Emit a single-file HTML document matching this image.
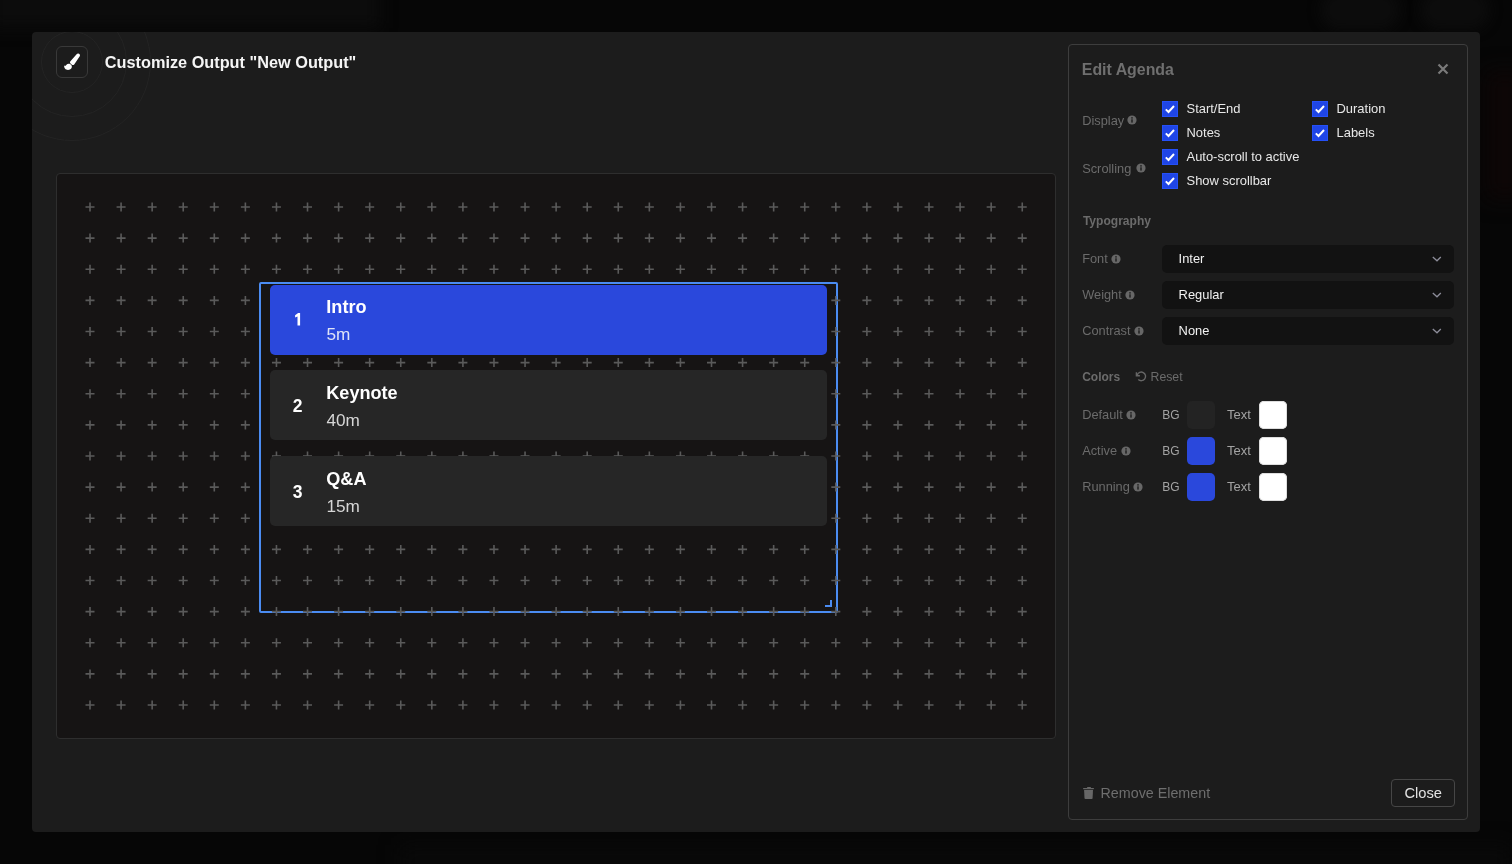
<!DOCTYPE html>
<html><head><meta charset="utf-8"><style>
*{box-sizing:border-box;margin:0;padding:0}
html,body{width:1512px;height:864px;overflow:hidden;background:#060606;font-family:"Liberation Sans", sans-serif}
#root{position:absolute;left:0;top:0;width:1512px;height:864px;overflow:hidden;will-change:transform}
.r{position:absolute}
.t{position:absolute;line-height:1;white-space:nowrap}
</style></head><body><div id="root">
<div class="r" style="left:0px;top:0px;width:1512px;height:864px;background:#060606"></div>
<div class="r" style="left:-10px;top:-20px;width:390px;height:48px;background:#0c0c0c;filter:blur(8px)"></div>
<div class="r" style="left:1320px;top:-10px;width:80px;height:40px;background:#0c0c0c;border-radius:20px;filter:blur(6px)"></div>
<div class="r" style="left:1420px;top:-10px;width:70px;height:40px;background:#0c0c0c;border-radius:20px;filter:blur(6px)"></div>
<div class="r" style="left:400px;top:845px;width:1112px;height:40px;background:#090909;filter:blur(10px)"></div>
<div class="r" style="left:1485px;top:70px;width:40px;height:130px;background:#0d0606;filter:blur(10px)"></div>
<div class="r" style="left:32px;top:32px;width:1448px;height:800px;background:#1c1c1c;border-radius:4px"></div>
<div class="r" style="left:32px;top:32px;width:1448px;height:800px;overflow:hidden;border-radius:4px">
<div class="r" style="left:9px;top:-1px;width:62px;height:62px;border:1px solid #242424;border-radius:50%"></div>
<div class="r" style="left:-15px;top:-25px;width:110px;height:110px;border:1px solid #242424;border-radius:50%"></div>
<div class="r" style="left:-39px;top:-49px;width:158px;height:158px;border:1px solid #242424;border-radius:50%"></div>
</div>
<div class="r" style="left:56px;top:46px;width:32px;height:32px;border:1px solid #393939;border-radius:6px;background:#1c1c1c"></div>
<svg class="r" style="left:60px;top:50px;" width="24" height="24" viewBox="0 0 24 24"><path d="M10.2 11.6L16.6 4.3A1.9 1.9 0 0 1 19.9 6.1L14.2 14.6Q13 15.6 11.6 14.6L10.5 13.6Q9.6 12.6 10.2 11.6Z" fill="#fff"/><path d="M4.2 15.2C4.6 16.4 5.8 16.1 6.5 14.8C7.5 13.3 10.5 13.3 11.6 15.6C12.5 17.6 11 19.9 8 19.9C5.5 19.9 3.8 17.8 4.2 15.2Z" fill="#fff"/></svg>
<div class="t" style="left:104.8px;top:54.20px;font-size:16.3px;color:#f5f5f5;font-weight:bold;">Customize Output "New Output"</div>
<div class="r" style="left:56px;top:173px;width:1000px;height:566px;background:#161414;border:1px solid #2e2e2e;border-radius:4px"></div>
<div class="r" style="left:259px;top:282px;width:579px;height:331px;border:2px solid #4b8cf2;border-radius:2px"></div>
<svg class="r" style="left:57px;top:174px;" width="998" height="564" viewBox="0 0 998 564"><g transform="translate(-57 -174)"><path d="M85.50 207.00h9M90.00 202.50v9M116.58 207.00h9M121.08 202.50v9M147.65 207.00h9M152.15 202.50v9M178.72 207.00h9M183.22 202.50v9M209.80 207.00h9M214.30 202.50v9M240.88 207.00h9M245.38 202.50v9M271.95 207.00h9M276.45 202.50v9M303.02 207.00h9M307.52 202.50v9M334.10 207.00h9M338.60 202.50v9M365.18 207.00h9M369.68 202.50v9M396.25 207.00h9M400.75 202.50v9M427.32 207.00h9M431.82 202.50v9M458.40 207.00h9M462.90 202.50v9M489.47 207.00h9M493.97 202.50v9M520.55 207.00h9M525.05 202.50v9M551.62 207.00h9M556.12 202.50v9M582.70 207.00h9M587.20 202.50v9M613.77 207.00h9M618.27 202.50v9M644.85 207.00h9M649.35 202.50v9M675.92 207.00h9M680.42 202.50v9M707.00 207.00h9M711.50 202.50v9M738.07 207.00h9M742.57 202.50v9M769.15 207.00h9M773.65 202.50v9M800.23 207.00h9M804.73 202.50v9M831.30 207.00h9M835.80 202.50v9M862.38 207.00h9M866.88 202.50v9M893.45 207.00h9M897.95 202.50v9M924.52 207.00h9M929.02 202.50v9M955.60 207.00h9M960.10 202.50v9M986.67 207.00h9M991.17 202.50v9M1017.75 207.00h9M1022.25 202.50v9M85.50 238.12h9M90.00 233.62v9M116.58 238.12h9M121.08 233.62v9M147.65 238.12h9M152.15 233.62v9M178.72 238.12h9M183.22 233.62v9M209.80 238.12h9M214.30 233.62v9M240.88 238.12h9M245.38 233.62v9M271.95 238.12h9M276.45 233.62v9M303.02 238.12h9M307.52 233.62v9M334.10 238.12h9M338.60 233.62v9M365.18 238.12h9M369.68 233.62v9M396.25 238.12h9M400.75 233.62v9M427.32 238.12h9M431.82 233.62v9M458.40 238.12h9M462.90 233.62v9M489.47 238.12h9M493.97 233.62v9M520.55 238.12h9M525.05 233.62v9M551.62 238.12h9M556.12 233.62v9M582.70 238.12h9M587.20 233.62v9M613.77 238.12h9M618.27 233.62v9M644.85 238.12h9M649.35 233.62v9M675.92 238.12h9M680.42 233.62v9M707.00 238.12h9M711.50 233.62v9M738.07 238.12h9M742.57 233.62v9M769.15 238.12h9M773.65 233.62v9M800.23 238.12h9M804.73 233.62v9M831.30 238.12h9M835.80 233.62v9M862.38 238.12h9M866.88 233.62v9M893.45 238.12h9M897.95 233.62v9M924.52 238.12h9M929.02 233.62v9M955.60 238.12h9M960.10 233.62v9M986.67 238.12h9M991.17 233.62v9M1017.75 238.12h9M1022.25 233.62v9M85.50 269.25h9M90.00 264.75v9M116.58 269.25h9M121.08 264.75v9M147.65 269.25h9M152.15 264.75v9M178.72 269.25h9M183.22 264.75v9M209.80 269.25h9M214.30 264.75v9M240.88 269.25h9M245.38 264.75v9M271.95 269.25h9M276.45 264.75v9M303.02 269.25h9M307.52 264.75v9M334.10 269.25h9M338.60 264.75v9M365.18 269.25h9M369.68 264.75v9M396.25 269.25h9M400.75 264.75v9M427.32 269.25h9M431.82 264.75v9M458.40 269.25h9M462.90 264.75v9M489.47 269.25h9M493.97 264.75v9M520.55 269.25h9M525.05 264.75v9M551.62 269.25h9M556.12 264.75v9M582.70 269.25h9M587.20 264.75v9M613.77 269.25h9M618.27 264.75v9M644.85 269.25h9M649.35 264.75v9M675.92 269.25h9M680.42 264.75v9M707.00 269.25h9M711.50 264.75v9M738.07 269.25h9M742.57 264.75v9M769.15 269.25h9M773.65 264.75v9M800.23 269.25h9M804.73 264.75v9M831.30 269.25h9M835.80 264.75v9M862.38 269.25h9M866.88 264.75v9M893.45 269.25h9M897.95 264.75v9M924.52 269.25h9M929.02 264.75v9M955.60 269.25h9M960.10 264.75v9M986.67 269.25h9M991.17 264.75v9M1017.75 269.25h9M1022.25 264.75v9M85.50 300.38h9M90.00 295.88v9M116.58 300.38h9M121.08 295.88v9M147.65 300.38h9M152.15 295.88v9M178.72 300.38h9M183.22 295.88v9M209.80 300.38h9M214.30 295.88v9M240.88 300.38h9M245.38 295.88v9M271.95 300.38h9M276.45 295.88v9M303.02 300.38h9M307.52 295.88v9M334.10 300.38h9M338.60 295.88v9M365.18 300.38h9M369.68 295.88v9M396.25 300.38h9M400.75 295.88v9M427.32 300.38h9M431.82 295.88v9M458.40 300.38h9M462.90 295.88v9M489.47 300.38h9M493.97 295.88v9M520.55 300.38h9M525.05 295.88v9M551.62 300.38h9M556.12 295.88v9M582.70 300.38h9M587.20 295.88v9M613.77 300.38h9M618.27 295.88v9M644.85 300.38h9M649.35 295.88v9M675.92 300.38h9M680.42 295.88v9M707.00 300.38h9M711.50 295.88v9M738.07 300.38h9M742.57 295.88v9M769.15 300.38h9M773.65 295.88v9M800.23 300.38h9M804.73 295.88v9M831.30 300.38h9M835.80 295.88v9M862.38 300.38h9M866.88 295.88v9M893.45 300.38h9M897.95 295.88v9M924.52 300.38h9M929.02 295.88v9M955.60 300.38h9M960.10 295.88v9M986.67 300.38h9M991.17 295.88v9M1017.75 300.38h9M1022.25 295.88v9M85.50 331.50h9M90.00 327.00v9M116.58 331.50h9M121.08 327.00v9M147.65 331.50h9M152.15 327.00v9M178.72 331.50h9M183.22 327.00v9M209.80 331.50h9M214.30 327.00v9M240.88 331.50h9M245.38 327.00v9M271.95 331.50h9M276.45 327.00v9M303.02 331.50h9M307.52 327.00v9M334.10 331.50h9M338.60 327.00v9M365.18 331.50h9M369.68 327.00v9M396.25 331.50h9M400.75 327.00v9M427.32 331.50h9M431.82 327.00v9M458.40 331.50h9M462.90 327.00v9M489.47 331.50h9M493.97 327.00v9M520.55 331.50h9M525.05 327.00v9M551.62 331.50h9M556.12 327.00v9M582.70 331.50h9M587.20 327.00v9M613.77 331.50h9M618.27 327.00v9M644.85 331.50h9M649.35 327.00v9M675.92 331.50h9M680.42 327.00v9M707.00 331.50h9M711.50 327.00v9M738.07 331.50h9M742.57 327.00v9M769.15 331.50h9M773.65 327.00v9M800.23 331.50h9M804.73 327.00v9M831.30 331.50h9M835.80 327.00v9M862.38 331.50h9M866.88 327.00v9M893.45 331.50h9M897.95 327.00v9M924.52 331.50h9M929.02 327.00v9M955.60 331.50h9M960.10 327.00v9M986.67 331.50h9M991.17 327.00v9M1017.75 331.50h9M1022.25 327.00v9M85.50 362.62h9M90.00 358.12v9M116.58 362.62h9M121.08 358.12v9M147.65 362.62h9M152.15 358.12v9M178.72 362.62h9M183.22 358.12v9M209.80 362.62h9M214.30 358.12v9M240.88 362.62h9M245.38 358.12v9M271.95 362.62h9M276.45 358.12v9M303.02 362.62h9M307.52 358.12v9M334.10 362.62h9M338.60 358.12v9M365.18 362.62h9M369.68 358.12v9M396.25 362.62h9M400.75 358.12v9M427.32 362.62h9M431.82 358.12v9M458.40 362.62h9M462.90 358.12v9M489.47 362.62h9M493.97 358.12v9M520.55 362.62h9M525.05 358.12v9M551.62 362.62h9M556.12 358.12v9M582.70 362.62h9M587.20 358.12v9M613.77 362.62h9M618.27 358.12v9M644.85 362.62h9M649.35 358.12v9M675.92 362.62h9M680.42 358.12v9M707.00 362.62h9M711.50 358.12v9M738.07 362.62h9M742.57 358.12v9M769.15 362.62h9M773.65 358.12v9M800.23 362.62h9M804.73 358.12v9M831.30 362.62h9M835.80 358.12v9M862.38 362.62h9M866.88 358.12v9M893.45 362.62h9M897.95 358.12v9M924.52 362.62h9M929.02 358.12v9M955.60 362.62h9M960.10 358.12v9M986.67 362.62h9M991.17 358.12v9M1017.75 362.62h9M1022.25 358.12v9M85.50 393.75h9M90.00 389.25v9M116.58 393.75h9M121.08 389.25v9M147.65 393.75h9M152.15 389.25v9M178.72 393.75h9M183.22 389.25v9M209.80 393.75h9M214.30 389.25v9M240.88 393.75h9M245.38 389.25v9M271.95 393.75h9M276.45 389.25v9M303.02 393.75h9M307.52 389.25v9M334.10 393.75h9M338.60 389.25v9M365.18 393.75h9M369.68 389.25v9M396.25 393.75h9M400.75 389.25v9M427.32 393.75h9M431.82 389.25v9M458.40 393.75h9M462.90 389.25v9M489.47 393.75h9M493.97 389.25v9M520.55 393.75h9M525.05 389.25v9M551.62 393.75h9M556.12 389.25v9M582.70 393.75h9M587.20 389.25v9M613.77 393.75h9M618.27 389.25v9M644.85 393.75h9M649.35 389.25v9M675.92 393.75h9M680.42 389.25v9M707.00 393.75h9M711.50 389.25v9M738.07 393.75h9M742.57 389.25v9M769.15 393.75h9M773.65 389.25v9M800.23 393.75h9M804.73 389.25v9M831.30 393.75h9M835.80 389.25v9M862.38 393.75h9M866.88 389.25v9M893.45 393.75h9M897.95 389.25v9M924.52 393.75h9M929.02 389.25v9M955.60 393.75h9M960.10 389.25v9M986.67 393.75h9M991.17 389.25v9M1017.75 393.75h9M1022.25 389.25v9M85.50 424.88h9M90.00 420.38v9M116.58 424.88h9M121.08 420.38v9M147.65 424.88h9M152.15 420.38v9M178.72 424.88h9M183.22 420.38v9M209.80 424.88h9M214.30 420.38v9M240.88 424.88h9M245.38 420.38v9M271.95 424.88h9M276.45 420.38v9M303.02 424.88h9M307.52 420.38v9M334.10 424.88h9M338.60 420.38v9M365.18 424.88h9M369.68 420.38v9M396.25 424.88h9M400.75 420.38v9M427.32 424.88h9M431.82 420.38v9M458.40 424.88h9M462.90 420.38v9M489.47 424.88h9M493.97 420.38v9M520.55 424.88h9M525.05 420.38v9M551.62 424.88h9M556.12 420.38v9M582.70 424.88h9M587.20 420.38v9M613.77 424.88h9M618.27 420.38v9M644.85 424.88h9M649.35 420.38v9M675.92 424.88h9M680.42 420.38v9M707.00 424.88h9M711.50 420.38v9M738.07 424.88h9M742.57 420.38v9M769.15 424.88h9M773.65 420.38v9M800.23 424.88h9M804.73 420.38v9M831.30 424.88h9M835.80 420.38v9M862.38 424.88h9M866.88 420.38v9M893.45 424.88h9M897.95 420.38v9M924.52 424.88h9M929.02 420.38v9M955.60 424.88h9M960.10 420.38v9M986.67 424.88h9M991.17 420.38v9M1017.75 424.88h9M1022.25 420.38v9M85.50 456.00h9M90.00 451.50v9M116.58 456.00h9M121.08 451.50v9M147.65 456.00h9M152.15 451.50v9M178.72 456.00h9M183.22 451.50v9M209.80 456.00h9M214.30 451.50v9M240.88 456.00h9M245.38 451.50v9M271.95 456.00h9M276.45 451.50v9M303.02 456.00h9M307.52 451.50v9M334.10 456.00h9M338.60 451.50v9M365.18 456.00h9M369.68 451.50v9M396.25 456.00h9M400.75 451.50v9M427.32 456.00h9M431.82 451.50v9M458.40 456.00h9M462.90 451.50v9M489.47 456.00h9M493.97 451.50v9M520.55 456.00h9M525.05 451.50v9M551.62 456.00h9M556.12 451.50v9M582.70 456.00h9M587.20 451.50v9M613.77 456.00h9M618.27 451.50v9M644.85 456.00h9M649.35 451.50v9M675.92 456.00h9M680.42 451.50v9M707.00 456.00h9M711.50 451.50v9M738.07 456.00h9M742.57 451.50v9M769.15 456.00h9M773.65 451.50v9M800.23 456.00h9M804.73 451.50v9M831.30 456.00h9M835.80 451.50v9M862.38 456.00h9M866.88 451.50v9M893.45 456.00h9M897.95 451.50v9M924.52 456.00h9M929.02 451.50v9M955.60 456.00h9M960.10 451.50v9M986.67 456.00h9M991.17 451.50v9M1017.75 456.00h9M1022.25 451.50v9M85.50 487.12h9M90.00 482.62v9M116.58 487.12h9M121.08 482.62v9M147.65 487.12h9M152.15 482.62v9M178.72 487.12h9M183.22 482.62v9M209.80 487.12h9M214.30 482.62v9M240.88 487.12h9M245.38 482.62v9M271.95 487.12h9M276.45 482.62v9M303.02 487.12h9M307.52 482.62v9M334.10 487.12h9M338.60 482.62v9M365.18 487.12h9M369.68 482.62v9M396.25 487.12h9M400.75 482.62v9M427.32 487.12h9M431.82 482.62v9M458.40 487.12h9M462.90 482.62v9M489.47 487.12h9M493.97 482.62v9M520.55 487.12h9M525.05 482.62v9M551.62 487.12h9M556.12 482.62v9M582.70 487.12h9M587.20 482.62v9M613.77 487.12h9M618.27 482.62v9M644.85 487.12h9M649.35 482.62v9M675.92 487.12h9M680.42 482.62v9M707.00 487.12h9M711.50 482.62v9M738.07 487.12h9M742.57 482.62v9M769.15 487.12h9M773.65 482.62v9M800.23 487.12h9M804.73 482.62v9M831.30 487.12h9M835.80 482.62v9M862.38 487.12h9M866.88 482.62v9M893.45 487.12h9M897.95 482.62v9M924.52 487.12h9M929.02 482.62v9M955.60 487.12h9M960.10 482.62v9M986.67 487.12h9M991.17 482.62v9M1017.75 487.12h9M1022.25 482.62v9M85.50 518.25h9M90.00 513.75v9M116.58 518.25h9M121.08 513.75v9M147.65 518.25h9M152.15 513.75v9M178.72 518.25h9M183.22 513.75v9M209.80 518.25h9M214.30 513.75v9M240.88 518.25h9M245.38 513.75v9M271.95 518.25h9M276.45 513.75v9M303.02 518.25h9M307.52 513.75v9M334.10 518.25h9M338.60 513.75v9M365.18 518.25h9M369.68 513.75v9M396.25 518.25h9M400.75 513.75v9M427.32 518.25h9M431.82 513.75v9M458.40 518.25h9M462.90 513.75v9M489.47 518.25h9M493.97 513.75v9M520.55 518.25h9M525.05 513.75v9M551.62 518.25h9M556.12 513.75v9M582.70 518.25h9M587.20 513.75v9M613.77 518.25h9M618.27 513.75v9M644.85 518.25h9M649.35 513.75v9M675.92 518.25h9M680.42 513.75v9M707.00 518.25h9M711.50 513.75v9M738.07 518.25h9M742.57 513.75v9M769.15 518.25h9M773.65 513.75v9M800.23 518.25h9M804.73 513.75v9M831.30 518.25h9M835.80 513.75v9M862.38 518.25h9M866.88 513.75v9M893.45 518.25h9M897.95 513.75v9M924.52 518.25h9M929.02 513.75v9M955.60 518.25h9M960.10 513.75v9M986.67 518.25h9M991.17 513.75v9M1017.75 518.25h9M1022.25 513.75v9M85.50 549.38h9M90.00 544.88v9M116.58 549.38h9M121.08 544.88v9M147.65 549.38h9M152.15 544.88v9M178.72 549.38h9M183.22 544.88v9M209.80 549.38h9M214.30 544.88v9M240.88 549.38h9M245.38 544.88v9M271.95 549.38h9M276.45 544.88v9M303.02 549.38h9M307.52 544.88v9M334.10 549.38h9M338.60 544.88v9M365.18 549.38h9M369.68 544.88v9M396.25 549.38h9M400.75 544.88v9M427.32 549.38h9M431.82 544.88v9M458.40 549.38h9M462.90 544.88v9M489.47 549.38h9M493.97 544.88v9M520.55 549.38h9M525.05 544.88v9M551.62 549.38h9M556.12 544.88v9M582.70 549.38h9M587.20 544.88v9M613.77 549.38h9M618.27 544.88v9M644.85 549.38h9M649.35 544.88v9M675.92 549.38h9M680.42 544.88v9M707.00 549.38h9M711.50 544.88v9M738.07 549.38h9M742.57 544.88v9M769.15 549.38h9M773.65 544.88v9M800.23 549.38h9M804.73 544.88v9M831.30 549.38h9M835.80 544.88v9M862.38 549.38h9M866.88 544.88v9M893.45 549.38h9M897.95 544.88v9M924.52 549.38h9M929.02 544.88v9M955.60 549.38h9M960.10 544.88v9M986.67 549.38h9M991.17 544.88v9M1017.75 549.38h9M1022.25 544.88v9M85.50 580.50h9M90.00 576.00v9M116.58 580.50h9M121.08 576.00v9M147.65 580.50h9M152.15 576.00v9M178.72 580.50h9M183.22 576.00v9M209.80 580.50h9M214.30 576.00v9M240.88 580.50h9M245.38 576.00v9M271.95 580.50h9M276.45 576.00v9M303.02 580.50h9M307.52 576.00v9M334.10 580.50h9M338.60 576.00v9M365.18 580.50h9M369.68 576.00v9M396.25 580.50h9M400.75 576.00v9M427.32 580.50h9M431.82 576.00v9M458.40 580.50h9M462.90 576.00v9M489.47 580.50h9M493.97 576.00v9M520.55 580.50h9M525.05 576.00v9M551.62 580.50h9M556.12 576.00v9M582.70 580.50h9M587.20 576.00v9M613.77 580.50h9M618.27 576.00v9M644.85 580.50h9M649.35 576.00v9M675.92 580.50h9M680.42 576.00v9M707.00 580.50h9M711.50 576.00v9M738.07 580.50h9M742.57 576.00v9M769.15 580.50h9M773.65 576.00v9M800.23 580.50h9M804.73 576.00v9M831.30 580.50h9M835.80 576.00v9M862.38 580.50h9M866.88 576.00v9M893.45 580.50h9M897.95 576.00v9M924.52 580.50h9M929.02 576.00v9M955.60 580.50h9M960.10 576.00v9M986.67 580.50h9M991.17 576.00v9M1017.75 580.50h9M1022.25 576.00v9M85.50 611.62h9M90.00 607.12v9M116.58 611.62h9M121.08 607.12v9M147.65 611.62h9M152.15 607.12v9M178.72 611.62h9M183.22 607.12v9M209.80 611.62h9M214.30 607.12v9M240.88 611.62h9M245.38 607.12v9M271.95 611.62h9M276.45 607.12v9M303.02 611.62h9M307.52 607.12v9M334.10 611.62h9M338.60 607.12v9M365.18 611.62h9M369.68 607.12v9M396.25 611.62h9M400.75 607.12v9M427.32 611.62h9M431.82 607.12v9M458.40 611.62h9M462.90 607.12v9M489.47 611.62h9M493.97 607.12v9M520.55 611.62h9M525.05 607.12v9M551.62 611.62h9M556.12 607.12v9M582.70 611.62h9M587.20 607.12v9M613.77 611.62h9M618.27 607.12v9M644.85 611.62h9M649.35 607.12v9M675.92 611.62h9M680.42 607.12v9M707.00 611.62h9M711.50 607.12v9M738.07 611.62h9M742.57 607.12v9M769.15 611.62h9M773.65 607.12v9M800.23 611.62h9M804.73 607.12v9M831.30 611.62h9M835.80 607.12v9M862.38 611.62h9M866.88 607.12v9M893.45 611.62h9M897.95 607.12v9M924.52 611.62h9M929.02 607.12v9M955.60 611.62h9M960.10 607.12v9M986.67 611.62h9M991.17 607.12v9M1017.75 611.62h9M1022.25 607.12v9M85.50 642.75h9M90.00 638.25v9M116.58 642.75h9M121.08 638.25v9M147.65 642.75h9M152.15 638.25v9M178.72 642.75h9M183.22 638.25v9M209.80 642.75h9M214.30 638.25v9M240.88 642.75h9M245.38 638.25v9M271.95 642.75h9M276.45 638.25v9M303.02 642.75h9M307.52 638.25v9M334.10 642.75h9M338.60 638.25v9M365.18 642.75h9M369.68 638.25v9M396.25 642.75h9M400.75 638.25v9M427.32 642.75h9M431.82 638.25v9M458.40 642.75h9M462.90 638.25v9M489.47 642.75h9M493.97 638.25v9M520.55 642.75h9M525.05 638.25v9M551.62 642.75h9M556.12 638.25v9M582.70 642.75h9M587.20 638.25v9M613.77 642.75h9M618.27 638.25v9M644.85 642.75h9M649.35 638.25v9M675.92 642.75h9M680.42 638.25v9M707.00 642.75h9M711.50 638.25v9M738.07 642.75h9M742.57 638.25v9M769.15 642.75h9M773.65 638.25v9M800.23 642.75h9M804.73 638.25v9M831.30 642.75h9M835.80 638.25v9M862.38 642.75h9M866.88 638.25v9M893.45 642.75h9M897.95 638.25v9M924.52 642.75h9M929.02 638.25v9M955.60 642.75h9M960.10 638.25v9M986.67 642.75h9M991.17 638.25v9M1017.75 642.75h9M1022.25 638.25v9M85.50 673.88h9M90.00 669.38v9M116.58 673.88h9M121.08 669.38v9M147.65 673.88h9M152.15 669.38v9M178.72 673.88h9M183.22 669.38v9M209.80 673.88h9M214.30 669.38v9M240.88 673.88h9M245.38 669.38v9M271.95 673.88h9M276.45 669.38v9M303.02 673.88h9M307.52 669.38v9M334.10 673.88h9M338.60 669.38v9M365.18 673.88h9M369.68 669.38v9M396.25 673.88h9M400.75 669.38v9M427.32 673.88h9M431.82 669.38v9M458.40 673.88h9M462.90 669.38v9M489.47 673.88h9M493.97 669.38v9M520.55 673.88h9M525.05 669.38v9M551.62 673.88h9M556.12 669.38v9M582.70 673.88h9M587.20 669.38v9M613.77 673.88h9M618.27 669.38v9M644.85 673.88h9M649.35 669.38v9M675.92 673.88h9M680.42 669.38v9M707.00 673.88h9M711.50 669.38v9M738.07 673.88h9M742.57 669.38v9M769.15 673.88h9M773.65 669.38v9M800.23 673.88h9M804.73 669.38v9M831.30 673.88h9M835.80 669.38v9M862.38 673.88h9M866.88 669.38v9M893.45 673.88h9M897.95 669.38v9M924.52 673.88h9M929.02 669.38v9M955.60 673.88h9M960.10 669.38v9M986.67 673.88h9M991.17 669.38v9M1017.75 673.88h9M1022.25 669.38v9M85.50 705.00h9M90.00 700.50v9M116.58 705.00h9M121.08 700.50v9M147.65 705.00h9M152.15 700.50v9M178.72 705.00h9M183.22 700.50v9M209.80 705.00h9M214.30 700.50v9M240.88 705.00h9M245.38 700.50v9M271.95 705.00h9M276.45 700.50v9M303.02 705.00h9M307.52 700.50v9M334.10 705.00h9M338.60 700.50v9M365.18 705.00h9M369.68 700.50v9M396.25 705.00h9M400.75 700.50v9M427.32 705.00h9M431.82 700.50v9M458.40 705.00h9M462.90 700.50v9M489.47 705.00h9M493.97 700.50v9M520.55 705.00h9M525.05 700.50v9M551.62 705.00h9M556.12 700.50v9M582.70 705.00h9M587.20 700.50v9M613.77 705.00h9M618.27 700.50v9M644.85 705.00h9M649.35 700.50v9M675.92 705.00h9M680.42 700.50v9M707.00 705.00h9M711.50 700.50v9M738.07 705.00h9M742.57 700.50v9M769.15 705.00h9M773.65 700.50v9M800.23 705.00h9M804.73 700.50v9M831.30 705.00h9M835.80 700.50v9M862.38 705.00h9M866.88 700.50v9M893.45 705.00h9M897.95 700.50v9M924.52 705.00h9M929.02 700.50v9M955.60 705.00h9M960.10 700.50v9M986.67 705.00h9M991.17 700.50v9M1017.75 705.00h9M1022.25 700.50v9" stroke="#5a5a5a" stroke-width="1.6" fill="none"/></g></svg>
<svg class="r" style="left:824px;top:600px;" width="10" height="10" viewBox="0 0 10 10"><path d="M1 6H7V0" stroke="#4b8cf2" stroke-width="2" fill="none"/></svg>
<div class="r" style="left:270px;top:285px;width:557px;height:70px;background:#2a48dc;border-radius:5px"></div>
<svg class="r" style="left:290px;top:308px;" width="16" height="22" viewBox="0 0 16 22"><path d="M10.1 5.1V17.6H7.5V8.4L5.1 9.6V7.2L8.1 5.1Z" fill="#fff"/></svg>
<div class="t" style="left:326.3px;top:297.68px;font-size:18.1px;color:#ffffff;font-weight:bold;">Intro</div>
<div class="t" style="left:326.4px;top:326.34px;font-size:17.2px;color:#dfe3f7;font-weight:normal;">5m</div>
<div class="r" style="left:270px;top:370px;width:557px;height:70px;background:#262626;border-radius:5px"></div>
<div class="t" style="left:297.5px;top:397.69px;font-size:17.5px;color:#ffffff;font-weight:bold;transform:translateX(-50%)">2</div>
<div class="t" style="left:326.3px;top:383.68px;font-size:18.1px;color:#ffffff;font-weight:bold;">Keynote</div>
<div class="t" style="left:326.4px;top:412.34px;font-size:17.2px;color:#d6d6d6;font-weight:normal;">40m</div>
<div class="r" style="left:270px;top:456px;width:557px;height:70px;background:#262626;border-radius:5px"></div>
<div class="t" style="left:297.5px;top:483.69px;font-size:17.5px;color:#ffffff;font-weight:bold;transform:translateX(-50%)">3</div>
<div class="t" style="left:326.3px;top:469.68px;font-size:18.1px;color:#ffffff;font-weight:bold;">Q&amp;A</div>
<div class="t" style="left:326.4px;top:498.34px;font-size:17.2px;color:#d6d6d6;font-weight:normal;">15m</div>
<div class="r" style="left:1068px;top:44px;width:400px;height:776px;border:1px solid #3d3d3d;border-radius:4px"></div>
<div class="t" style="left:1081.8px;top:62.04px;font-size:15.9px;color:#6f6f6f;font-weight:bold;">Edit Agenda</div>
<svg class="r" style="left:1437px;top:63px;" width="12" height="12" viewBox="0 0 12 12"><path d="M1.5 1.5L10.5 10.5M10.5 1.5L1.5 10.5" stroke="#7a7a7a" stroke-width="2.2"/></svg>
<div class="t" style="left:1082.2px;top:115.46px;font-size:12.8px;color:#6b6b6b;font-weight:normal;">Display</div>
<svg class="r" style="left:1126.8px;top:115.4px;" width="10" height="10" viewBox="0 0 10 10"><circle cx="5" cy="5" r="4.6" fill="#676767"/><rect x="4.3" y="4.3" width="1.4" height="3.3" fill="#1c1c1c"/><circle cx="5" cy="2.9" r="0.8" fill="#1c1c1c"/></svg>
<div class="t" style="left:1082.2px;top:163.46px;font-size:12.8px;color:#6b6b6b;font-weight:normal;">Scrolling</div>
<svg class="r" style="left:1135.5px;top:163.4px;" width="10" height="10" viewBox="0 0 10 10"><circle cx="5" cy="5" r="4.6" fill="#676767"/><rect x="4.3" y="4.3" width="1.4" height="3.3" fill="#1c1c1c"/><circle cx="5" cy="2.9" r="0.8" fill="#1c1c1c"/></svg>
<div class="r" style="left:1162px;top:101px;width:16px;height:16px;background:#1f45e6;box-shadow:inset 0 0 0 1px #2550f7"></div>
<svg class="r" style="left:1162px;top:101px;" width="16" height="16" viewBox="0 0 16 16"><path d="M3.8 8.4L6.5 11L12 5" stroke="#fff" stroke-width="2" fill="none" stroke-linecap="butt"/></svg>
<div class="t" style="left:1186.5px;top:103.14px;font-size:12.95px;color:#e8e8e8;font-weight:normal;">Start/End</div>
<div class="r" style="left:1312px;top:101px;width:16px;height:16px;background:#1f45e6;box-shadow:inset 0 0 0 1px #2550f7"></div>
<svg class="r" style="left:1312px;top:101px;" width="16" height="16" viewBox="0 0 16 16"><path d="M3.8 8.4L6.5 11L12 5" stroke="#fff" stroke-width="2" fill="none" stroke-linecap="butt"/></svg>
<div class="t" style="left:1336.5px;top:103.14px;font-size:12.95px;color:#e8e8e8;font-weight:normal;">Duration</div>
<div class="r" style="left:1162px;top:125px;width:16px;height:16px;background:#1f45e6;box-shadow:inset 0 0 0 1px #2550f7"></div>
<svg class="r" style="left:1162px;top:125px;" width="16" height="16" viewBox="0 0 16 16"><path d="M3.8 8.4L6.5 11L12 5" stroke="#fff" stroke-width="2" fill="none" stroke-linecap="butt"/></svg>
<div class="t" style="left:1186.5px;top:127.14px;font-size:12.95px;color:#e8e8e8;font-weight:normal;">Notes</div>
<div class="r" style="left:1312px;top:125px;width:16px;height:16px;background:#1f45e6;box-shadow:inset 0 0 0 1px #2550f7"></div>
<svg class="r" style="left:1312px;top:125px;" width="16" height="16" viewBox="0 0 16 16"><path d="M3.8 8.4L6.5 11L12 5" stroke="#fff" stroke-width="2" fill="none" stroke-linecap="butt"/></svg>
<div class="t" style="left:1336.5px;top:127.14px;font-size:12.95px;color:#e8e8e8;font-weight:normal;">Labels</div>
<div class="r" style="left:1162px;top:149px;width:16px;height:16px;background:#1f45e6;box-shadow:inset 0 0 0 1px #2550f7"></div>
<svg class="r" style="left:1162px;top:149px;" width="16" height="16" viewBox="0 0 16 16"><path d="M3.8 8.4L6.5 11L12 5" stroke="#fff" stroke-width="2" fill="none" stroke-linecap="butt"/></svg>
<div class="t" style="left:1186.5px;top:151.14px;font-size:12.95px;color:#e8e8e8;font-weight:normal;">Auto-scroll to active</div>
<div class="r" style="left:1162px;top:173px;width:16px;height:16px;background:#1f45e6;box-shadow:inset 0 0 0 1px #2550f7"></div>
<svg class="r" style="left:1162px;top:173px;" width="16" height="16" viewBox="0 0 16 16"><path d="M3.8 8.4L6.5 11L12 5" stroke="#fff" stroke-width="2" fill="none" stroke-linecap="butt"/></svg>
<div class="t" style="left:1186.5px;top:175.14px;font-size:12.95px;color:#e8e8e8;font-weight:normal;">Show scrollbar</div>
<div class="t" style="left:1082.9px;top:215.40px;font-size:12.05px;color:#6b6b6b;font-weight:bold;">Typography</div>
<div class="t" style="left:1082.2px;top:253.16px;font-size:12.8px;color:#6b6b6b;font-weight:normal;">Font</div>
<svg class="r" style="left:1111px;top:253.60000000000002px;" width="10" height="10" viewBox="0 0 10 10"><circle cx="5" cy="5" r="4.6" fill="#676767"/><rect x="4.3" y="4.3" width="1.4" height="3.3" fill="#1c1c1c"/><circle cx="5" cy="2.9" r="0.8" fill="#1c1c1c"/></svg>
<div class="r" style="left:1162px;top:245px;width:292px;height:28px;background:#121212;border-radius:5px"></div>
<div class="t" style="left:1178.6px;top:253.08px;font-size:12.9px;color:#f2f2f2;font-weight:normal;">Inter</div>
<svg class="r" style="left:1430px;top:254px;" width="14" height="10" viewBox="0 0 14 10"><path d="M2.8 3L7 6.8L10.8 3" stroke="#8d8d9a" stroke-width="1.3" fill="none"/></svg>
<div class="t" style="left:1082.2px;top:289.16px;font-size:12.8px;color:#6b6b6b;font-weight:normal;">Weight</div>
<svg class="r" style="left:1124.5px;top:289.6px;" width="10" height="10" viewBox="0 0 10 10"><circle cx="5" cy="5" r="4.6" fill="#676767"/><rect x="4.3" y="4.3" width="1.4" height="3.3" fill="#1c1c1c"/><circle cx="5" cy="2.9" r="0.8" fill="#1c1c1c"/></svg>
<div class="r" style="left:1162px;top:281px;width:292px;height:28px;background:#121212;border-radius:5px"></div>
<div class="t" style="left:1178.6px;top:289.08px;font-size:12.9px;color:#f2f2f2;font-weight:normal;">Regular</div>
<svg class="r" style="left:1430px;top:290px;" width="14" height="10" viewBox="0 0 14 10"><path d="M2.8 3L7 6.8L10.8 3" stroke="#8d8d9a" stroke-width="1.3" fill="none"/></svg>
<div class="t" style="left:1082.2px;top:325.16px;font-size:12.8px;color:#6b6b6b;font-weight:normal;">Contrast</div>
<svg class="r" style="left:1133.5px;top:325.6px;" width="10" height="10" viewBox="0 0 10 10"><circle cx="5" cy="5" r="4.6" fill="#676767"/><rect x="4.3" y="4.3" width="1.4" height="3.3" fill="#1c1c1c"/><circle cx="5" cy="2.9" r="0.8" fill="#1c1c1c"/></svg>
<div class="r" style="left:1162px;top:317px;width:292px;height:28px;background:#121212;border-radius:5px"></div>
<div class="t" style="left:1178.6px;top:325.08px;font-size:12.9px;color:#f2f2f2;font-weight:normal;">None</div>
<svg class="r" style="left:1430px;top:326px;" width="14" height="10" viewBox="0 0 14 10"><path d="M2.8 3L7 6.8L10.8 3" stroke="#8d8d9a" stroke-width="1.3" fill="none"/></svg>
<div class="t" style="left:1082.2px;top:371.04px;font-size:12.0px;color:#6b6b6b;font-weight:bold;">Colors</div>
<svg class="r" style="left:1132px;top:368px;" width="18" height="18" viewBox="0 0 18 18"><path d="M4.4 4.2V7.7H7.9" stroke="#676767" stroke-width="1.4" fill="none"/><path d="M5.2 7A4.3 4.3 0 1 1 6.3 11.5" stroke="#676767" stroke-width="1.4" fill="none"/></svg>
<div class="t" style="left:1150.5px;top:370.79px;font-size:12.3px;color:#6b6b6b;font-weight:normal;">Reset</div>
<div class="t" style="left:1082.2px;top:409.46px;font-size:12.8px;color:#6b6b6b;font-weight:normal;">Default</div>
<svg class="r" style="left:1126px;top:409.6px;" width="10" height="10" viewBox="0 0 10 10"><circle cx="5" cy="5" r="4.6" fill="#676767"/><rect x="4.3" y="4.3" width="1.4" height="3.3" fill="#1c1c1c"/><circle cx="5" cy="2.9" r="0.8" fill="#1c1c1c"/></svg>
<div class="t" style="left:1162.2px;top:409.44px;font-size:12.0px;color:#a3a3a3;font-weight:normal;">BG</div>
<div class="r" style="left:1187px;top:401px;width:28px;height:28px;background:#232323;border-radius:5px"></div>
<div class="t" style="left:1227.1px;top:407.80px;font-size:13.0px;color:#a3a3a3;font-weight:normal;">Text</div>
<div class="r" style="left:1259px;top:401px;width:28px;height:28px;background:#fff;border-radius:5px;box-shadow:inset 0 0 0 1px #ddd"></div>
<div class="t" style="left:1082.2px;top:445.46px;font-size:12.8px;color:#6b6b6b;font-weight:normal;">Active</div>
<svg class="r" style="left:1120.5px;top:445.6px;" width="10" height="10" viewBox="0 0 10 10"><circle cx="5" cy="5" r="4.6" fill="#676767"/><rect x="4.3" y="4.3" width="1.4" height="3.3" fill="#1c1c1c"/><circle cx="5" cy="2.9" r="0.8" fill="#1c1c1c"/></svg>
<div class="t" style="left:1162.2px;top:445.44px;font-size:12.0px;color:#a3a3a3;font-weight:normal;">BG</div>
<div class="r" style="left:1187px;top:437px;width:28px;height:28px;background:#2a48dc;border-radius:5px"></div>
<div class="t" style="left:1227.1px;top:443.80px;font-size:13.0px;color:#a3a3a3;font-weight:normal;">Text</div>
<div class="r" style="left:1259px;top:437px;width:28px;height:28px;background:#fff;border-radius:5px;box-shadow:inset 0 0 0 1px #ddd"></div>
<div class="t" style="left:1082.2px;top:481.46px;font-size:12.8px;color:#6b6b6b;font-weight:normal;">Running</div>
<svg class="r" style="left:1132.5px;top:481.6px;" width="10" height="10" viewBox="0 0 10 10"><circle cx="5" cy="5" r="4.6" fill="#676767"/><rect x="4.3" y="4.3" width="1.4" height="3.3" fill="#1c1c1c"/><circle cx="5" cy="2.9" r="0.8" fill="#1c1c1c"/></svg>
<div class="t" style="left:1162.2px;top:481.44px;font-size:12.0px;color:#a3a3a3;font-weight:normal;">BG</div>
<div class="r" style="left:1187px;top:473px;width:28px;height:28px;background:#2a48dc;border-radius:5px"></div>
<div class="t" style="left:1227.1px;top:479.80px;font-size:13.0px;color:#a3a3a3;font-weight:normal;">Text</div>
<div class="r" style="left:1259px;top:473px;width:28px;height:28px;background:#fff;border-radius:5px;box-shadow:inset 0 0 0 1px #ddd"></div>
<svg class="r" style="left:1080px;top:782px;" width="18" height="22" viewBox="0 0 18 22"><rect x="3" y="5.9" width="11" height="1.3" rx="0.6" fill="#676767"/><rect x="7" y="5" width="4" height="1.5" rx="0.7" fill="#676767"/><path d="M4.1 8H13L12.6 16.2Q12.5 17 11.7 17H5.4Q4.6 17 4.5 16.2Z" fill="#676767"/></svg>
<div class="t" style="left:1100.5px;top:786.00px;font-size:14.3px;color:#6e6e6e;font-weight:normal;">Remove Element</div>
<div class="r" style="left:1391px;top:779px;width:64px;height:28px;border:1px solid #464646;border-radius:4px"></div>
<div class="t" style="left:1404.4px;top:785.56px;font-size:14.7px;color:#e2e2e2;font-weight:normal;">Close</div>
</div></body></html>
